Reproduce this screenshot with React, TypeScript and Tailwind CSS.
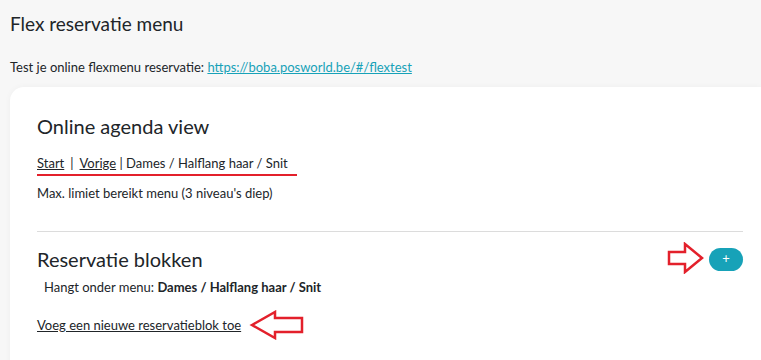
import React from "react"

function ArrowRight() {
  return (
    <svg width="38" height="32" viewBox="0 0 38 32" className="absolute left-[667px] top-[242px]">
      <path d="M2 10 H18 V2 L35 16 L18 30 V22 H2 Z" fill="none" stroke="#e3202b" strokeWidth="2.5" strokeLinejoin="miter" />
    </svg>
  )
}

function ArrowLeft() {
  return (
    <svg width="56" height="30" viewBox="0 0 56 30" className="absolute left-[249px] top-[310px]">
      <path d="M3 15 L26 2 V8 H53 V22 H26 V28 Z" fill="none" stroke="#e3202b" strokeWidth="2.5" strokeLinejoin="miter" />
    </svg>
  )
}

export default function App() {
  return (
    <div
      className="relative h-[360px] overflow-hidden bg-[#f7f7f7] pl-[10px] text-[#212529]"
      style={{ fontFamily: "Lato, 'Open Sans', sans-serif" }}
    >
      <h1 className="pt-[12px] text-[19px] leading-[24px]">Flex reservatie menu</h1>
      <p className="mt-[22px] text-[13px] leading-[18px]">
        Test je online flexmenu reservatie:{" "}
        <a className="text-[#17a2b8] underline">https://boba.posworld.be/#/flextest</a>
      </p>
      <div className="mt-[11px] rounded-tl-[14px] bg-white pl-[27px] pr-[18px] pt-[26px] shadow-[0_0_6px_rgba(0,0,0,0.04)]">
        <h2 className="text-[20px] leading-[26px]">Online agenda view</h2>
        <div className="mt-[15px] text-[13px] leading-[18px]">
          <span className="underline">Start</span>
          <span className="mx-[6px]">|</span>
          <span className="underline">Vorige</span> | Dames / Halflang haar / Snit
        </div>
        <div className="mt-[2px] h-[2px] w-[260px] bg-[#e3202b]" />
        <p className="mt-[8px] text-[13px] leading-[18px]">Max. limiet bereikt menu (3 niveau's diep)</p>
        <div className="mt-[29px] border-t border-[#dcdcdc]" />
        <div className="mt-[14px] flex items-center justify-between">
          <h2 className="text-[20px] leading-[26px]">Reservatie blokken</h2>
          <button className="flex h-[23px] w-[34px] items-center justify-center rounded-full bg-[#17a2b8] text-[13px] text-white">
            +
          </button>
        </div>
        <p className="mt-[6px] pl-[7px] text-[13px] leading-[18px]">
          Hangt onder menu: <b>Dames / Halflang haar / Snit</b>
        </p>
        <p className="mt-[20px] text-[13px] leading-[18px] underline">Voeg een nieuwe reservatieblok toe</p>
        <div className="h-[40px]" />
      </div>
      <ArrowRight />
      <ArrowLeft />
    </div>
  )
}
